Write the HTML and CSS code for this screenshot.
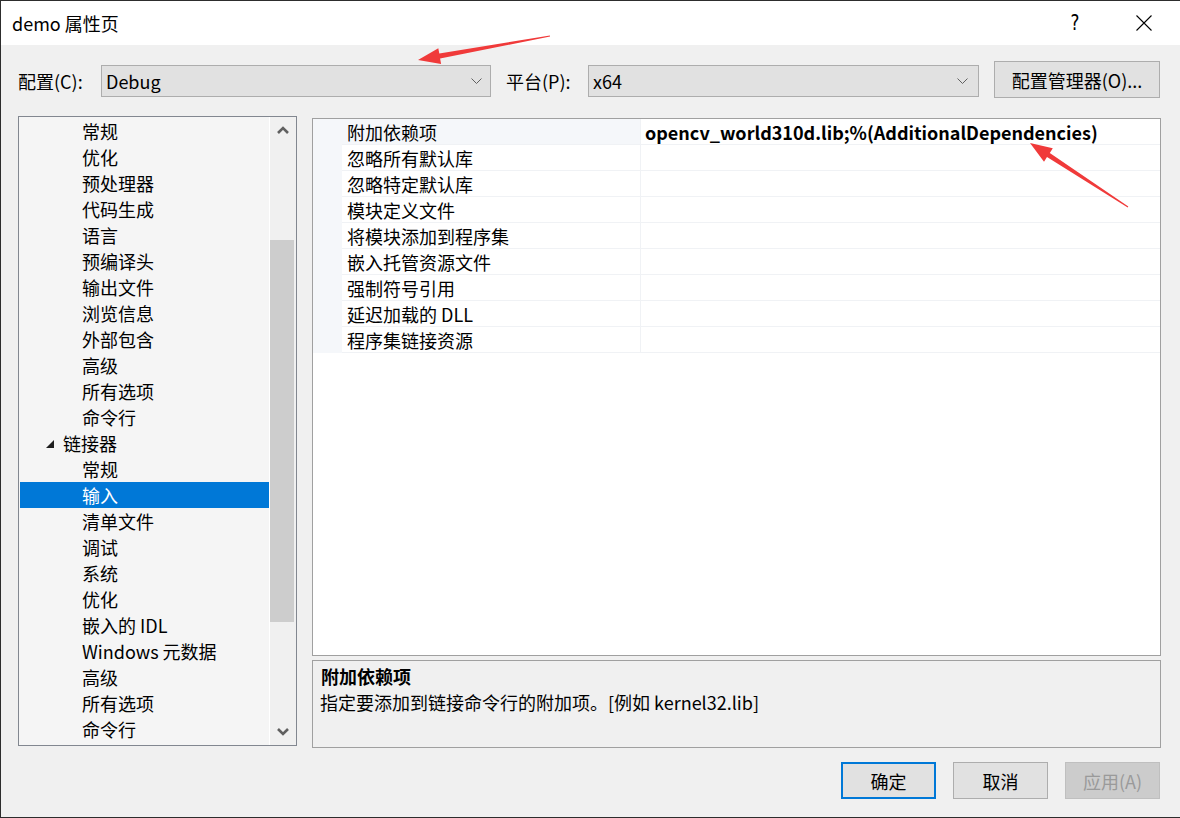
FILE: index.html
```html
<!DOCTYPE html>
<html lang="zh-CN">
<head>
<meta charset="utf-8">
<title>demo 属性页</title>
<link rel="stylesheet" href="styles.css">
</head>
<body>
<div class="window">
  <div class="titlebar">
    <span class="title">demo 属性页</span>
    <span class="help">?</span>
    <span class="close"><svg width="16" height="16" viewBox="0 0 16 16"><path d="M0.5 0.5 L15.5 15.5 M15.5 0.5 L0.5 15.5" stroke="#000" stroke-width="1.1" fill="none"/></svg></span>
  </div>

  <div class="config-row">
    <span class="cfg-label">配置(C):</span>
    <div class="combo combo-config"><span>Debug</span><svg class="chev" width="11" height="6" viewBox="0 0 11 6"><path d="M0.5 0.5 L5.5 5.5 L10.5 0.5" stroke="#606060" stroke-width="1" fill="none"/></svg></div>
    <span class="cfg-label plat-label">平台(P):</span>
    <div class="combo combo-plat"><span>x64</span><svg class="chev" width="11" height="6" viewBox="0 0 11 6"><path d="M0.5 0.5 L5.5 5.5 L10.5 0.5" stroke="#606060" stroke-width="1" fill="none"/></svg></div>
    <button class="btn mgr-btn">配置管理器(O)...</button>
  </div>

  <div class="main">
    <div class="tree">
      <div class="tree-list">
        <div class="node">常规</div>
        <div class="node">优化</div>
        <div class="node">预处理器</div>
        <div class="node">代码生成</div>
        <div class="node">语言</div>
        <div class="node">预编译头</div>
        <div class="node">输出文件</div>
        <div class="node">浏览信息</div>
        <div class="node">外部包含</div>
        <div class="node">高级</div>
        <div class="node">所有选项</div>
        <div class="node">命令行</div>
        <div class="node l1"><svg class="expander" width="8" height="8" viewBox="0 0 8 8"><polygon points="8,0 8,8 0,8" fill="#1e1e1e"/></svg>链接器</div>
        <div class="node">常规</div>
        <div class="node selected">输入</div>
        <div class="node">清单文件</div>
        <div class="node">调试</div>
        <div class="node">系统</div>
        <div class="node">优化</div>
        <div class="node">嵌入的 IDL</div>
        <div class="node">Windows 元数据</div>
        <div class="node">高级</div>
        <div class="node">所有选项</div>
        <div class="node">命令行</div>
      </div>
      <div class="scrollbar">
        <div class="sb-btn"><svg width="12" height="8" viewBox="0 0 12 8"><path d="M1 7 L6 2 L11 7" stroke="#606060" stroke-width="2.6" fill="none"/></svg></div>
        <div class="sb-track"><div class="sb-thumb"></div></div>
        <div class="sb-btn"><svg width="12" height="8" viewBox="0 0 12 8"><path d="M1 1 L6 6 L11 1" stroke="#606060" stroke-width="2.6" fill="none"/></svg></div>
      </div>
    </div>

    <div class="right">
      <div class="grid">
        <div class="prow current"><div class="gutter"></div><div class="pname">附加依赖项</div><div class="pval">opencv_world310d.lib;%(AdditionalDependencies)</div></div>
        <div class="prow"><div class="gutter"></div><div class="pname">忽略所有默认库</div><div class="pval"></div></div>
        <div class="prow"><div class="gutter"></div><div class="pname">忽略特定默认库</div><div class="pval"></div></div>
        <div class="prow"><div class="gutter"></div><div class="pname">模块定义文件</div><div class="pval"></div></div>
        <div class="prow"><div class="gutter"></div><div class="pname">将模块添加到程序集</div><div class="pval"></div></div>
        <div class="prow"><div class="gutter"></div><div class="pname">嵌入托管资源文件</div><div class="pval"></div></div>
        <div class="prow"><div class="gutter"></div><div class="pname">强制符号引用</div><div class="pval"></div></div>
        <div class="prow"><div class="gutter"></div><div class="pname">延迟加载的 DLL</div><div class="pval"></div></div>
        <div class="prow"><div class="gutter"></div><div class="pname">程序集链接资源</div><div class="pval"></div></div>
      </div>
      <div class="desc">
        <div class="desc-title">附加依赖项</div>
        <div class="desc-text">指定要添加到链接命令行的附加项。[例如 kernel32.lib]</div>
      </div>
    </div>
  </div>

  <div class="buttons">
    <button class="btn dlg-btn default">确定</button>
    <button class="btn dlg-btn">取消</button>
    <button class="btn dlg-btn disabled">应用(A)</button>
  </div>

  <svg class="annot" width="1180" height="818" viewBox="0 0 1180 818">
    <polygon fill="#f03a3a" points="418,60 438.3,48.2 439.3,53.6 549.9,35.5 550.1,36.5 440.1,58.6 441.1,64.0"/>
    <polygon fill="#f03a3a" points="1030,143 1052.8,148.3 1049.8,152.9 1128.3,206.6 1127.7,207.4 1047.0,157.1 1044.0,161.7"/>
  </svg>
</div>
</body>
</html>
```

FILE: styles.css
```css
* {
  box-sizing: border-box;
  margin: 0;
  padding: 0;
}

html, body {
  width: 1180px;
  height: 818px;
  overflow: hidden;
  background: #f0f0f0;
}

body {
  font-family: "Noto Sans CJK SC", "Microsoft YaHei", sans-serif;
  font-size: 18px;
  color: #000;
}

.window {
  position: relative;
  width: 1180px;
  height: 818px;
  border: 1px solid #2d2d2d;
  border-right: 0;
  background: #f0f0f0;
  display: flex;
  flex-direction: column;
}

/* title bar */
.titlebar {
  height: 44px;
  flex-shrink: 0;
  background: #fff;
  display: flex;
  align-items: center;
  padding-left: 11px;
  padding-right: 28px;
}

.title {
  flex: 1;
  line-height: 24px;
}

.help {
  width: 20px;
  text-align: center;
  font-family: "DejaVu Sans", sans-serif;
  font-size: 21px;
  line-height: 24px;
  transform: scaleX(0.8);
}

.close {
  margin-left: 51px;
  width: 16px;
  height: 16px;
  display: flex;
}

/* configuration row */
.config-row {
  display: flex;
  align-items: flex-start;
  padding: 16px 0 0 17px;
  height: 53px;
  flex-shrink: 0;
}

.cfg-label {
  width: 83px;
  margin-top: 4px;
  line-height: 32px;
  white-space: nowrap;
}

.plat-label {
  width: 82px;
  margin-left: 15px;
}

.combo {
  margin-top: 4px;
  height: 32px;
  border: 1px solid #adadad;
  background: #e1e1e1;
  display: flex;
  align-items: center;
  justify-content: space-between;
  padding: 0 8px 0 4px;
  line-height: 30px;
}

.combo-config { width: 390px; }
.combo-plat { width: 391px; padding-right: 10px; }

.chev { display: block; }

.btn {
  font-family: inherit;
  font-size: 18px;
  color: #000;
  background: #e1e1e1;
  border: 1px solid #adadad;
  display: flex;
  align-items: center;
  justify-content: center;
}

.mgr-btn {
  margin-left: 15px;
  width: 166px;
  height: 37px;
}

/* main area */
.main {
  display: flex;
  align-items: flex-start;
  margin-top: 18px;
  padding-left: 17px;
  height: 632px;
  flex-shrink: 0;
}

.tree {
  width: 279px;
  height: 630px;
  border: 1px solid #828790;
  background: #f5f5f5;
  display: flex;
}

.tree-list {
  width: 250px;
  padding: 1px 0 0 1px;
}

.node {
  height: 26px;
  line-height: 26px;
  padding-left: 62px;
  white-space: nowrap;
}

.node.l1 {
  padding-left: 26px;
  display: flex;
  align-items: center;
}

.expander {
  margin-right: 9px;
  margin-top: 2px;
}

.node.selected {
  background: #0078d7;
  color: #fff;
}

.scrollbar {
  width: 27px;
  border-left: 1px solid #fff;
  background: #f0f0f0;
  display: flex;
  flex-direction: column;
}

.sb-btn {
  height: 26px;
  display: flex;
  align-items: center;
  justify-content: center;
  flex-shrink: 0;
}

.sb-track {
  flex: 1;
}

.sb-thumb {
  margin-top: 97px;
  width: 24px;
  height: 382px;
  background: #cdcdcd;
}

.right {
  margin-left: 15px;
  margin-top: 2px;
  width: 849px;
}

.grid {
  height: 538px;
  border: 1px solid #a0a0a0;
  background: #fff;
}

.prow {
  display: flex;
  height: 26px;
}

.gutter {
  width: 29px;
  background: #f5f7fa;
}

.pname {
  width: 298px;
  padding-left: 5px;
  line-height: 26px;
  border-bottom: 1px solid #f0f2f5;
  white-space: nowrap;
}

.prow.current .pname {
  background: #f5f7fa;
}

.pval {
  flex: 1;
  border-left: 1px solid #f0f2f5;
  border-bottom: 1px solid #f0f2f5;
  padding-left: 4px;
  line-height: 26px;
  font-weight: 700;
  white-space: nowrap;
}

.desc {
  margin-top: 4px;
  height: 88px;
  border: 1px solid #a0a0a0;
  background: #f0f0f0;
  padding: 2px 0 0 8px;
  line-height: 26px;
}

.desc-title {
  font-weight: 700;
}

.desc-text {
  margin-left: -1px;
}

/* dialog buttons */
.buttons {
  display: flex;
  justify-content: flex-end;
  gap: 17px;
  margin-top: 14px;
  padding-right: 20px;
}

.dlg-btn {
  width: 95px;
  height: 37px;
}

.dlg-btn.default {
  border: 2px solid #0078d7;
}

.dlg-btn.disabled {
  background: #cccccc;
  border-color: #bfbfbf;
  color: #9a9a9a;
}

/* screenshot annotations (red arrows) */
.annot {
  position: absolute;
  top: -1px;
  left: -1px;
  pointer-events: none;
}
```
